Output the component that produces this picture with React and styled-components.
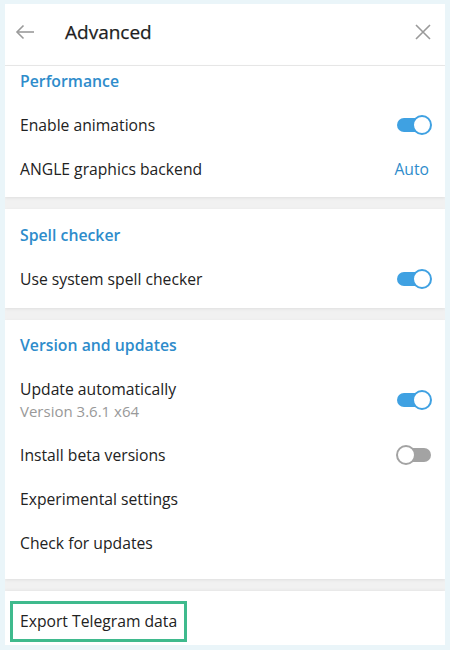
import styled, { createGlobalStyle } from "styled-components"

const GlobalStyle = createGlobalStyle`
	html, body {
		margin: 0;
		padding: 0;
		background: #eaf5f9;
	}
	body {
		font-family: "Open Sans", "Noto Sans", sans-serif;
		color: #222222;
	}
`

const sections = [
	{
		title: "Performance",
		top: 4,
		bottom: 6,
		rows: [
			{ label: "Enable animations", toggle: true },
			{ label: "ANGLE graphics backend", value: "Auto" },
		],
	},
	{
		title: "Spell checker",
		top: 15,
		bottom: 7,
		rows: [{ label: "Use system spell checker", toggle: true }],
	},
	{
		title: "Version and updates",
		top: 14,
		bottom: 14,
		rows: [
			{ label: "Update automatically", sub: "Version 3.6.1 x64", toggle: true },
			{ label: "Install beta versions", toggle: false },
			{ label: "Experimental settings" },
			{ label: "Check for updates" },
		],
	},
]

const Toggle = ({ on }) => (
	<ToggleBox>
		<Track $on={on} />
		<Knob $on={on} />
	</ToggleBox>
)

const App = () => {
	return (
		<>
			<GlobalStyle />
			<Frame>
				<Panel>
					<Header>
						<IconButton>
							<svg width="20" height="16" viewBox="0 0 20 16" fill="none" stroke="#9a9a9a" strokeWidth="1.6">
								<path d="M19 8H2" />
								<path d="M8.5 1.5L2 8l6.5 6.5" />
							</svg>
						</IconButton>
						<Title>Advanced</Title>
						<CloseButton>
							<svg width="16" height="16" viewBox="0 0 16 16" fill="none" stroke="#9a9a9a" strokeWidth="1.6">
								<path d="M1 1l14 14M15 1L1 15" />
							</svg>
						</CloseButton>
					</Header>
					{sections.map((s) => (
						<Section key={s.title} $top={s.top} $bottom={s.bottom}>
							<SectionTitle>{s.title}</SectionTitle>
							{s.rows.map((r) => (
								<Row key={r.label} $tall={!!r.sub}>
									<Labels>
										<Label>{r.label}</Label>
										{r.sub && <SubLabel>{r.sub}</SubLabel>}
									</Labels>
									{r.value && <Value>{r.value}</Value>}
									{r.toggle !== undefined && <Toggle on={r.toggle} />}
								</Row>
							))}
						</Section>
					))}
					<LastSection>
						<Highlight>Export Telegram data</Highlight>
					</LastSection>
				</Panel>
			</Frame>
		</>
	)
}

export default App

const Frame = styled.div`
	width: 450px;
	height: 650px;
	box-sizing: border-box;
	padding: 4px 5px 5px;
`

const Panel = styled.div`
	height: 100%;
	display: flex;
	flex-direction: column;
	gap: 12px;
	background: #f1f1f1;
	overflow: hidden;
`

const Header = styled.div`
	height: 62px;
	box-sizing: border-box;
	padding: 0 14px 6px 10px;
	display: flex;
	align-items: center;
	background: #ffffff;
	border-bottom: 1px solid #e9e9e9;
	margin-bottom: -12px;
`

const IconButton = styled.div`
	width: 20px;
	height: 16px;
	display: flex;
	margin-right: 30px;
`

const CloseButton = styled.div`
	margin-left: auto;
	display: flex;
`

const Title = styled.div`
	font-size: 19px;
	font-weight: 500;
	color: #1e1e1e;
	-webkit-text-stroke: 0.25px #1e1e1e;
`

const Section = styled.div`
	background: #ffffff;
	padding: ${(p) => p.$top}px 13px ${(p) => p.$bottom}px 15px;
	box-shadow: 0 1px 3px rgba(0, 0, 0, 0.08);
`

const SectionTitle = styled.div`
	font-size: 15.8px;
	font-weight: 600;
	line-height: 22px;
	color: #2e8ccb;
	margin-bottom: 11px;
`

const Row = styled.div`
	height: ${(p) => (p.$tall ? 66 : 44)}px;
	display: flex;
	align-items: center;
	justify-content: space-between;
`

const Labels = styled.div`
	display: flex;
	flex-direction: column;
`

const Label = styled.div`
	font-size: 15.7px;
	line-height: 22px;
	color: #222222;
`

const SubLabel = styled.div`
	font-size: 15px;
	line-height: 22px;
	color: #999999;
`

const Value = styled.div`
	font-size: 15.7px;
	color: #2e8ccb;
	margin-right: 3px;
`

const ToggleBox = styled.div`
	position: relative;
	width: 36px;
	height: 20px;
	flex-shrink: 0;
`

const Track = styled.div`
	position: absolute;
	left: 1px;
	right: 1px;
	top: 3px;
	height: 14px;
	border-radius: 7px;
	background: ${(p) => (p.$on ? "#3fa1e2" : "#a3a3a3")};
`

const Knob = styled.div`
	position: absolute;
	top: 0;
	${(p) => (p.$on ? "right: 0;" : "left: 0;")}
	width: 20px;
	height: 20px;
	box-sizing: border-box;
	border-radius: 50%;
	background: #ffffff;
	border: 2px solid ${(p) => (p.$on ? "#3fa1e2" : "#a3a3a3")};
`

const LastSection = styled.div`
	flex: 1;
	background: #ffffff;
	padding: 10px 0 0 5px;
	box-shadow: 0 -1px 3px rgba(0, 0, 0, 0.05);
`

const Highlight = styled.div`
	display: inline-block;
	font-size: 15.7px;
	line-height: 22px;
	padding: 6px 7px 7px;
	border: 3px solid #3fba8d;
`
